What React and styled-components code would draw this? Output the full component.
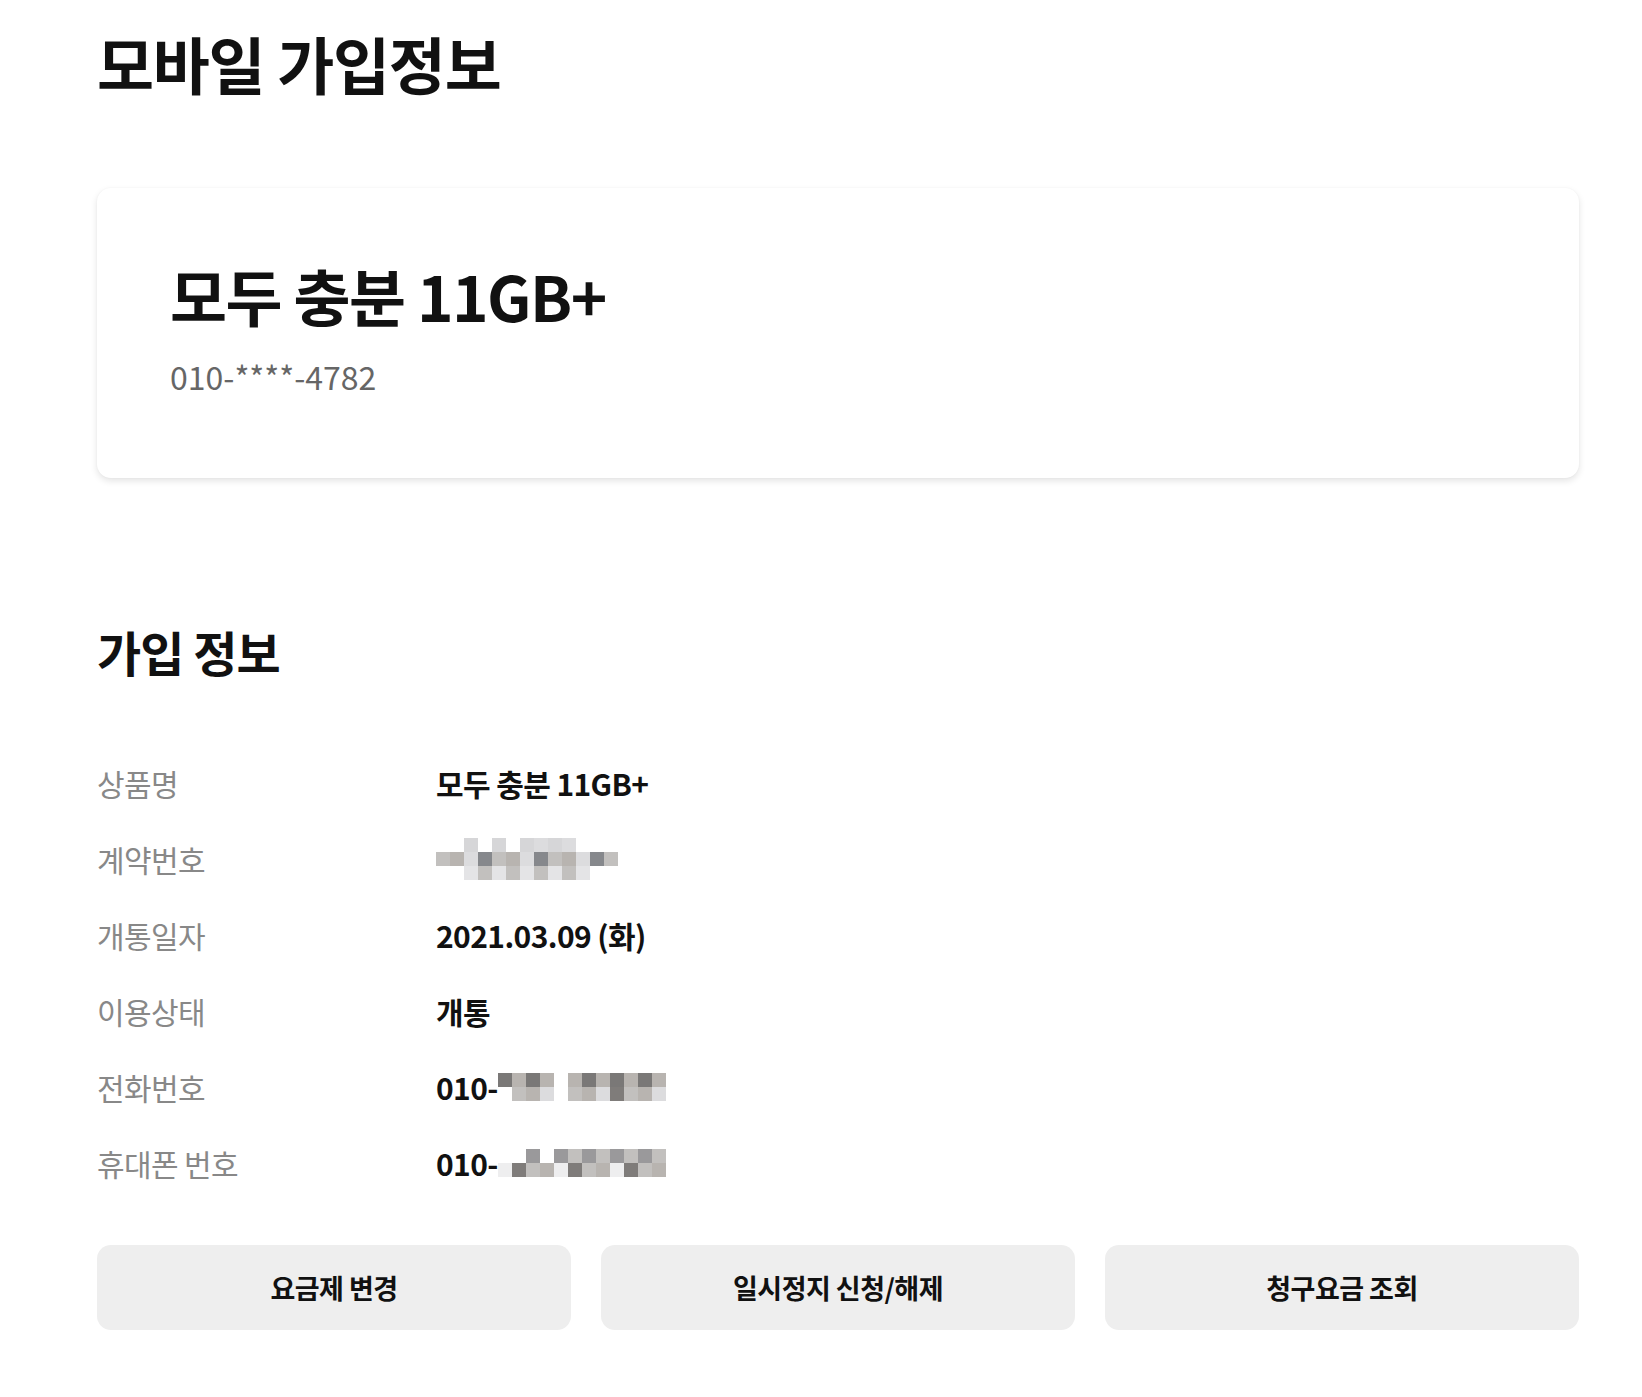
import React from "react";
import styled, { createGlobalStyle } from "styled-components";

const GlobalStyle = createGlobalStyle`
  html, body {
    margin: 0;
    padding: 0;
    background: #ffffff;
  }
  body {
    font-family: "Noto Sans CJK KR", "Noto Sans", sans-serif;
    color: #111111;
  }
`;

const Page = styled.div`
  box-sizing: border-box;
  width: 100%;
  padding: 32px 63px 60px 97px;
`;

const PageTitle = styled.h1`
  margin: 0;
  font-size: 62px;
  line-height: 1;
  font-weight: 700;
  letter-spacing: -0.02em;
  color: #111111;
`;

const PlanCard = styled.div`
  margin-top: 94px;
  height: 290px;
  box-sizing: border-box;
  padding: 76px 73px 0;
  border-radius: 14px;
  background: #ffffff;
  box-shadow: 0 3px 7px rgba(0, 0, 0, 0.11), 0 0 2px rgba(0, 0, 0, 0.04);
`;

const PlanName = styled.div`
  font-size: 62px;
  line-height: 1;
  font-weight: 700;
  letter-spacing: -0.025em;
  color: #111111;
`;

const PlanPhone = styled.div`
  margin-top: 34px;
  font-size: 32px;
  line-height: 1;
  color: #666666;
`;

const SectionTitle = styled.h2`
  margin: 149px 0 0;
  font-size: 48px;
  line-height: 1;
  font-weight: 700;
  letter-spacing: -0.02em;
  color: #111111;
`;

const InfoList = styled.dl`
  margin: 70px 0 0;
  display: grid;
  grid-template-columns: 339px 1fr;
  grid-auto-rows: 76px;
  align-items: center;
`;

const Label = styled.dt`
  font-size: 30px;
  color: #888888;
  letter-spacing: -0.02em;
`;

const Value = styled.dd`
  margin: 0;
  display: flex;
  align-items: center;
  font-size: 30px;
  font-weight: 700;
  letter-spacing: -0.02em;
  color: #111111;
`;

const ButtonRow = styled.div`
  margin-top: 44px;
  display: grid;
  grid-template-columns: repeat(3, 1fr);
  gap: 30px;
`;

const ActionButton = styled.button`
  height: 85px;
  border: none;
  border-radius: 14px;
  background: #eeeeee;
  font-family: inherit;
  font-size: 27px;
  font-weight: 700;
  letter-spacing: -0.02em;
  color: #111111;
  cursor: pointer;
`;

const mosaicGrays = [
  "#c8c4c0", "#8f8f91", "#e4e4e6", "#7f7c7a", "#9a999b", "#b8b4b0", "#d6d6d8",
  "#86888c", "#a8a5a2", "#eeeeef", "#8c8986", "#c2c0be", "#7a7877", "#dcdcde",
];

const Mosaic = ({ cols, rows, cell = 14, seed = 1, blank = [] }) => {
  const rects = [];
  for (let r = 0; r < rows; r++) {
    for (let c = 0; c < cols; c++) {
      if (blank.includes(`${r}-${c}`)) continue;
      const i = (c * 7 + r * 5 + seed * 3 + ((c * r) % 4)) % mosaicGrays.length;
      rects.push(
        <rect
          key={`${r}-${c}`}
          x={c * cell}
          y={r * cell}
          width={cell}
          height={cell}
          fill={mosaicGrays[i]}
        />
      );
    }
  }
  return (
    <svg width={cols * cell} height={rows * cell} style={{ display: "block" }}>
      {rects}
    </svg>
  );
};

const rows = [
  { label: "상품명", value: "모두 충분 11GB+" },
  { label: "계약번호", mosaic: { cols: 13, rows: 3, seed: 2, blank: ["0-0", "0-1", "0-3", "0-5", "0-10", "0-11", "0-12", "2-0", "2-1", "2-11", "2-12"] } },
  { label: "개통일자", value: "2021.03.09 (화)" },
  { label: "이용상태", value: "개통" },
  { label: "전화번호", prefix: "010-", mosaic: { cols: 12, rows: 2, seed: 4, blank: ["0-4", "1-4", "1-0"] } },
  { label: "휴대폰 번호", prefix: "010-", mosaic: { cols: 12, rows: 2, seed: 6, blank: ["0-0", "0-1", "0-3"] } },
];

const App = () => {
  return (
    <>
      <GlobalStyle />
      <Page>
        <PageTitle>모바일 가입정보</PageTitle>
        <PlanCard>
          <PlanName>모두 충분 11GB+</PlanName>
          <PlanPhone>010-****-4782</PlanPhone>
        </PlanCard>

        <SectionTitle>가입 정보</SectionTitle>
        <InfoList>
          {rows.map((row) => (
            <React.Fragment key={row.label}>
              <Label>{row.label}</Label>
              <Value>
                {row.prefix}
                {row.value}
                {row.mosaic && <Mosaic {...row.mosaic} />}
              </Value>
            </React.Fragment>
          ))}
        </InfoList>

        <ButtonRow>
          <ActionButton>요금제 변경</ActionButton>
          <ActionButton>일시정지 신청/해제</ActionButton>
          <ActionButton>청구요금 조회</ActionButton>
        </ButtonRow>
      </Page>
    </>
  );
};

export default App;
